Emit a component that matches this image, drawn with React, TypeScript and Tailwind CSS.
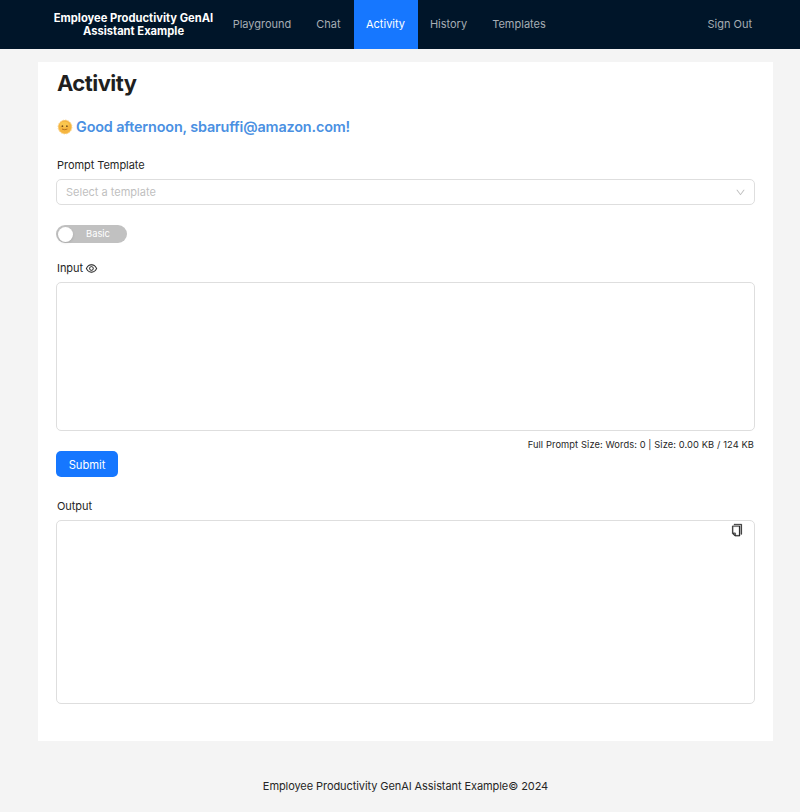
import { AiOutlineCopy, AiOutlineDown, AiOutlineEye } from "react-icons/ai";

const navItems = [
  { label: "Playground", width: "w-[83px]" },
  { label: "Chat", width: "w-[50px]" },
  { label: "Activity", width: "w-[64px]", active: true },
  { label: "History", width: "w-[62px]" },
  { label: "Templates", width: "w-[79px]" },
];

function Header() {
  return (
    <header className="flex h-[49px] items-stretch bg-[#001529] text-[11px] tracking-normal text-[#a6adb4]">
      <div className="ml-[46px] flex w-[175px] flex-col items-center justify-center whitespace-nowrap text-[11.2px] leading-[13px] font-bold text-white">
        <span>Employee Productivity GenAI</span>
        <span>Assistant Example</span>
      </div>
      <nav className="flex">
        {navItems.map((item) => (
          <a
            key={item.label}
            className={`flex items-center justify-center pr-px ${item.width} ${item.active ? "bg-[#1677ff] text-white" : ""}`}
          >
            {item.label}
          </a>
        ))}
      </nav>
      <a className="mr-[48px] ml-auto flex items-center">Sign Out</a>
    </header>
  );
}

function SunFace() {
  return (
    <svg viewBox="0 0 16 16" className="h-4 w-4">
      <circle cx="8" cy="8" r="6.9" fill="#f9cf7a" stroke="#f8cd80" strokeWidth="0.9" strokeDasharray="1.6 1.1" />
      <circle cx="8" cy="8" r="6.4" fill="#f5b540" />
      <ellipse cx="7.4" cy="5.6" rx="4.4" ry="2.8" fill="#fac64e" />
      <circle cx="5.4" cy="7.2" r="0.9" fill="#79501c" />
      <circle cx="9.9" cy="7.2" r="0.9" fill="#79501c" />
      <path d="M5 10.1q2.7 1.2 5.4 0" fill="none" stroke="#b36c1b" strokeWidth="0.9" />
    </svg>
  );
}

export default function App() {
  return (
    <div className="flex h-[812px] w-[800px] flex-col bg-[#f4f4f4] font-['Inter',sans-serif] text-[11px] tracking-[-0.05px] text-[#262626]">
      <Header />
      <main className="mt-[13px] ml-[38px] flex h-[679px] w-[735px] flex-col bg-white pr-[18px] pl-[18px]">
        <h1 className="mt-[6px] mb-px pl-[1px] text-[22px] leading-[30px] font-bold tracking-[-0.55px] text-[#1f1f1f]">
          Activity
        </h1>
        <div className="mt-[18px] flex h-5 items-center gap-[3px] pl-[1px] text-[14.4px] font-semibold tracking-[-0.15px] text-[#4a90e2]">
          <SunFace />
          <span>Good afternoon, sbaruffi@amazon.com!</span>
        </div>
        <label className="mt-[19px] pl-[1px] leading-[18px]">Prompt Template</label>
        <div className="mt-[5px] flex h-[26px] w-[699px] items-center justify-between rounded-[5px] border border-[#dedede] pr-[8px] pl-[9px] text-[#bfbfbf]">
          <span className="pt-px tracking-normal">Select a template</span>
          <AiOutlineDown className="h-[11px] w-[11px]" />
        </div>
        <button className="mt-[20px] flex h-[18px] w-[71px] items-center rounded-full bg-[#c1c1c1] pl-[2px] text-[9.4px] text-white">
          <span className="h-[15px] w-[15px] rounded-full bg-white shadow-sm" />
          <span className="ml-[13px] pt-px tracking-normal">Basic</span>
        </button>
        <label className="mt-[16px] flex items-center gap-[2px] pl-[1px] leading-[18px]">
          Input <AiOutlineEye className="h-[13px] w-[13px] stroke-[#262626] stroke-[12]" />
        </label>
        <div className="mt-[5px] h-[149px] w-[699px] rounded-[5px] border border-[#dedede]" />
        <div className="mt-[7px] h-[13px] w-[698px] text-right text-[9.3px] leading-[13px] tracking-[0.1px]">
          Full Prompt Size: Words: 0 | Size: 0.00 KB / 124 KB
        </div>
        <button className="flex h-[26px] w-[62px] items-center justify-center rounded-[5px] bg-[#1677ff] pt-[2px] text-[11.2px] text-white">
          Submit
        </button>
        <label className="mt-[20px] pl-[1px] leading-[18px]">Output</label>
        <div className="mt-[5px] flex h-[184px] w-[699px] justify-end rounded-[5px] border border-[#dedede] pt-[2px] pr-[10px]">
          <AiOutlineCopy className="h-[14px] w-[14px] stroke-[#262626] stroke-[16]" />
        </div>
      </main>
      <footer className="mt-[36px] ml-[38px] w-[735px] text-center leading-[18px] tracking-[-0.08px]">
        Employee Productivity GenAI Assistant Example© 2024
      </footer>
    </div>
  );
}
